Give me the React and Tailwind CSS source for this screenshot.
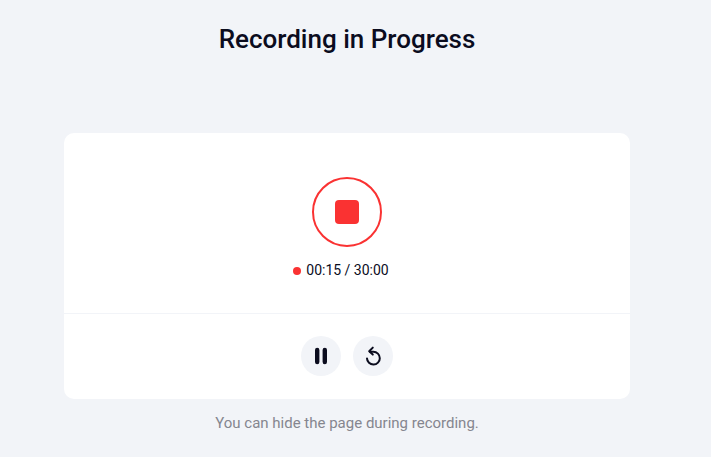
import React from 'react'

const App = () => {
  return (
    <div className="h-[457px] w-[711px] overflow-hidden bg-[#f2f4f8] font-['Roboto',sans-serif]">
      <div className="flex w-[694px] flex-col items-center">
        <h1 className="mt-[22px] h-[34px] text-[26px] leading-[34px] font-medium text-[#0b0c1e]">Recording in Progress</h1>

        {/* Card */}
        <div className="mt-[77px] w-[566px] rounded-[10px] bg-white">
          <div className="flex h-[181px] flex-col items-center border-b border-[#f2f4f8] pt-[44px]">
            <button className="flex h-[70px] w-[70px] items-center justify-center rounded-full border-2 border-[#fa3232]">
              <span className="h-6 w-6 rounded-[4px] bg-[#fa3232]" />
            </button>
            <div className="mt-[14px] mr-[12px] flex items-center gap-[5px] text-sm leading-[20px] text-[#0b0c1e]">
              <span className="h-2 w-2 rounded-full bg-[#fa3232]" />
              <span className="-mt-px">00:15 / 30:00</span>
            </div>
          </div>

          <div className="flex h-[85px] items-start justify-center gap-3 pt-[22px]">
            <button className="flex h-10 w-10 items-center justify-center rounded-full bg-[#f2f4f8]">
              <svg width="24" height="24" viewBox="0 0 24 24" fill="none" stroke="#0b0c1e" strokeWidth="4.4" strokeLinecap="round">
                <path d="M8.2 6v12" />
                <path d="M15.8 6v12" />
              </svg>
            </button>
            <button className="flex h-10 w-10 items-center justify-center rounded-full bg-[#f2f4f8]">
              <svg width="24" height="24" viewBox="0 0 24 24" fill="none" stroke="#0b0c1e" strokeWidth="2" strokeLinecap="round" strokeLinejoin="round">
                <path d="M6 14.4a6.4 6.4 0 1 0 6.4-6.6H9" />
                <path d="M11.8 3.6 8.2 7.2l3.6 3.4" />
              </svg>
            </button>
          </div>
        </div>

        <p className="mt-[14px] text-[15px] leading-[20px] text-[#85868f]">You can hide the page during recording.</p>
      </div>
    </div>
  )
}

export default App
